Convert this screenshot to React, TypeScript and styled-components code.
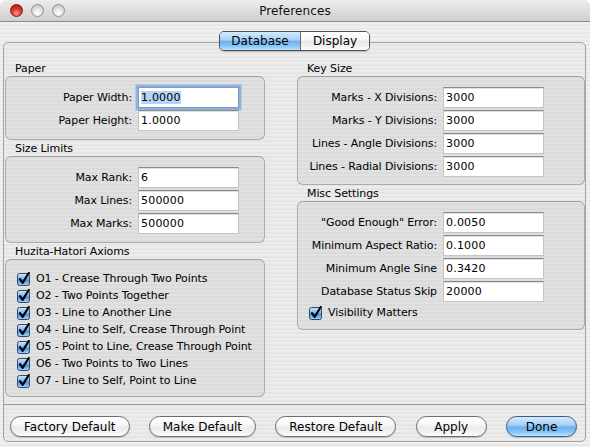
import React from "react";
import styled, { createGlobalStyle, css } from "styled-components";

const GlobalStyle = createGlobalStyle`
  html, body { margin: 0; padding: 0; background: #ffffff; }
  * { box-sizing: border-box; }
`;

const FONT = `"DejaVu Sans", "Liberation Sans", sans-serif`;

const Window = styled.div`
  width: 590px;
  height: 447px;
  border-radius: 6px 6px 0 0;
  overflow: hidden;
  display: flex;
  flex-direction: column;
  font-family: ${FONT};
  color: #000;
`;

const TitleBar = styled.div`
  height: 22px;
  flex: none;
  position: relative;
  display: flex;
  align-items: center;
  justify-content: center;
  background: linear-gradient(#ececec 0%, #dedede 50%, #cfcfcf 100%);
  border-bottom: 1px solid #8c8c8c;
`;

const Lights = styled.div`
  position: absolute;
  left: 10px;
  top: 4px;
  display: flex;
  gap: 8px;
`;

const Light = styled.div<{ $red?: boolean }>`
  width: 13px;
  height: 13px;
  border-radius: 50%;
  ${(p) =>
    p.$red
      ? css`
          background: radial-gradient(circle at 50% 75%, #ff9a8a 0%, #e0352a 45%, #a8120c 100%);
          border: 1px solid #7c1a14;
        `
      : css`
          background: radial-gradient(circle at 50% 75%, #ffffff 0%, #e2e2e2 50%, #b4b4b4 100%);
          border: 1px solid #8e8e8e;
        `}
`;

const Title = styled.div`
  font-size: 12px;
  letter-spacing: 0.1px;
  color: #111;
`;

const Body = styled.div`
  flex: 1;
  display: flex;
  flex-direction: column;
  align-items: stretch;
  padding: 9px 4px 5px 3px;
  background: repeating-linear-gradient(to bottom, #f0f0f0 0px, #f0f0f0 2px, #e9e9e9 2px, #e9e9e9 4px);
`;

const Segmented = styled.div`
  align-self: center;
  position: relative;
  z-index: 1;
  flex: none;
  display: flex;
  height: 20px;
  margin-bottom: -9px;
  border: 1px solid #4f4f4f;
  border-radius: 5px;
  overflow: hidden;
  box-shadow: 0 1px 1px rgba(0, 0, 0, 0.2);
`;

const Segment = styled.div<{ $active?: boolean; $w: number }>`
  width: ${(p) => p.$w}px;
  display: flex;
  align-items: center;
  justify-content: center;
  font-size: 12px;
  line-height: 18px;
  & + & { border-left: 1px solid #6a6a6a; }
  ${(p) =>
    p.$active
      ? css`
          background: linear-gradient(#d4eafe 0%, #a5cff6 45%, #6fb1f0 52%, #8cc9f8 80%, #b6e2fd 100%);
        `
      : css`
          background: linear-gradient(#ffffff 0%, #f6f6f6 45%, #e9e9e9 52%, #f2f2f2 80%, #fbfbfb 100%);
        `}
`;

const TabBox = styled.div`
  flex: 1;
  min-height: 0;
  display: flex;
  flex-direction: column;
  border: 1px solid #a3a3a3;
  border-radius: 5px;
  background: rgba(0, 0, 0, 0.015);
  & > * { flex: none; }
`;

const Columns = styled.div`
  display: grid;
  grid-template-columns: 260px 288px;
  column-gap: 32px;
  padding: 18px 0 0 1px;
  align-items: start;
`;

const Column = styled.div`
  display: flex;
  flex-direction: column;
  gap: 1px;
`;

const Group = styled.div`
  display: flex;
  flex-direction: column;
`;

const GroupLabel = styled.div`
  font-size: 11px;
  line-height: 15px;
  height: 15px;
  padding-left: 10px;
  letter-spacing: -0.1px;
`;

const GroupBox = styled.div<{ $pb?: number }>`
  border: 1px solid #ababab;
  border-top-color: #a0a0a0;
  border-radius: 6px;
  background: rgba(0, 0, 0, 0.045);
  padding: 10px 0 ${(p) => p.$pb ?? 8}px 0;
  display: flex;
  flex-direction: column;
  gap: 2px;
`;

const FieldRow = styled.div<{ $lw: number }>`
  display: grid;
  grid-template-columns: ${(p) => p.$lw}px 101px;
  column-gap: 6px;
  align-items: center;
  height: 21px;
`;

const FieldLabel = styled.div`
  font-size: 11px;
  text-align: right;
  white-space: nowrap;
  letter-spacing: -0.1px;
`;

const Field = styled.div<{ $focused?: boolean }>`
  height: 21px;
  background: #ffffff;
  border: 1px solid #c4c4c4;
  border-top-color: #8a8a8a;
  box-shadow: inset 0 1px 0 #e0e0e0;
  font-size: 11px;
  line-height: 19px;
  padding-left: 2px;
  letter-spacing: 0.2px;
  ${(p) =>
    p.$focused &&
    css`
      border-color: #7c9ac4;
      box-shadow: 0 0 0 2px #8db2e3, 0 0 0 3px rgba(141, 178, 227, 0.45);
    `}
`;

const Selection = styled.span`
  background: #b5d3f5;
`;

const CheckList = styled.div`
  display: flex;
  flex-direction: column;
  padding-left: 11px;
`;

const CheckRow = styled.div`
  height: 17px;
  display: flex;
  align-items: center;
  gap: 5px;
  font-size: 11px;
  letter-spacing: -0.1px;
  white-space: nowrap;
`;

const Separator = styled.div`
  height: 1px;
  background: #9a9a9a;
  margin-top: 7px;
`;

const ButtonRow = styled.div`
  display: flex;
  justify-content: space-between;
  padding: 11px 8px 0 6px;
`;

const Button = styled.div<{ $default?: boolean }>`
  height: 21px;
  min-width: 71px;
  padding: 0 13px;
  border-radius: 11px;
  display: flex;
  align-items: center;
  justify-content: center;
  font-size: 12px;
  white-space: nowrap;
  box-shadow: 0 1px 1px rgba(0, 0, 0, 0.18);
  ${(p) =>
    p.$default
      ? css`
          border: 1px solid #3a5a8e;
          background: linear-gradient(#d6ebfd 0%, #a9d1f7 40%, #6fb2ef 55%, #86c6f7 80%, #c0e8fe 100%);
        `
      : css`
          border: 1px solid #6e6e6e;
          background: linear-gradient(#ffffff 0%, #f7f7f7 40%, #ebebeb 55%, #f1f1f1 80%, #ffffff 100%);
        `}
`;

const CheckIcon = () => (
  <svg width="14" height="14" viewBox="0 0 14 14" style={{ flex: "none" }}>
    <defs>
      <linearGradient id="cbg" x1="0" y1="0" x2="0" y2="1">
        <stop offset="0" stopColor="#d2e8fc" />
        <stop offset="0.45" stopColor="#7fb8f0" />
        <stop offset="0.55" stopColor="#3f8fe6" />
        <stop offset="1" stopColor="#a2d8fd" />
      </linearGradient>
    </defs>
    <rect x="0.5" y="1.5" width="12" height="12" rx="2" fill="url(#cbg)" stroke="#33476b" />
    <path d="M3 7.2 L5.6 10.8 L11.8 1" fill="none" stroke="#000" strokeWidth="2.2" strokeLinecap="round" strokeLinejoin="round" />
  </svg>
);

type Row = { label: string; value: string; focused?: boolean };

const FieldGroup = ({ title, rows, lw, pb }: { title: string; rows: Row[]; lw: number; pb?: number }) => (
  <Group>
    <GroupLabel>{title}</GroupLabel>
    <GroupBox $pb={pb}>
      {rows.map((r) => (
        <FieldRow key={r.label} $lw={lw}>
          <FieldLabel>{r.label}</FieldLabel>
          <Field $focused={r.focused}>{r.focused ? <Selection>{r.value}</Selection> : r.value}</Field>
        </FieldRow>
      ))}
    </GroupBox>
  </Group>
);

const axioms = [
  "O1 - Crease Through Two Points",
  "O2 - Two Points Together",
  "O3 - Line to Another Line",
  "O4 - Line to Self, Crease Through Point",
  "O5 - Point to Line, Crease Through Point",
  "O6 - Two Points to Two Lines",
  "O7 - Line to Self, Point to Line",
];

export default function App() {
  return (
    <>
      <GlobalStyle />
      <Window>
        <TitleBar>
          <Lights>
            <Light $red />
            <Light />
            <Light />
          </Lights>
          <Title>Preferences</Title>
        </TitleBar>
        <Body>
          <Segmented>
            <Segment $active $w={80}>Database</Segment>
            <Segment $w={69}>Display</Segment>
          </Segmented>
          <TabBox>
            <Columns>
              <Column>
                <FieldGroup
                  title="Paper"
                  lw={126}
                  rows={[
                    { label: "Paper Width:", value: "1.0000", focused: true },
                    { label: "Paper Height:", value: "1.0000" },
                  ]}
                />
                <FieldGroup
                  title="Size Limits"
                  lw={126}
                  rows={[
                    { label: "Max Rank:", value: "6" },
                    { label: "Max Lines:", value: "500000" },
                    { label: "Max Marks:", value: "500000" },
                  ]}
                />
                <Group>
                  <GroupLabel>Huzita-Hatori Axioms</GroupLabel>
                  <GroupBox $pb={7}>
                    <CheckList>
                      {axioms.map((a) => (
                        <CheckRow key={a}>
                          <CheckIcon />
                          {a}
                        </CheckRow>
                      ))}
                    </CheckList>
                  </GroupBox>
                </Group>
              </Column>
              <Column>
                <FieldGroup
                  title="Key Size"
                  lw={139}
                  pb={7}
                  rows={[
                    { label: "Marks - X Divisions:", value: "3000" },
                    { label: "Marks - Y Divisions:", value: "3000" },
                    { label: "Lines - Angle Divisions:", value: "3000" },
                    { label: "Lines - Radial Divisions:", value: "3000" },
                  ]}
                />
                <Group>
                  <GroupLabel>Misc Settings</GroupLabel>
                  <GroupBox $pb={8}>
                    {[
                      { label: "\"Good Enough\" Error:", value: "0.0050" },
                      { label: "Minimum Aspect Ratio:", value: "0.1000" },
                      { label: "Minimum Angle Sine", value: "0.3420" },
                      { label: "Database Status Skip", value: "20000" },
                    ].map((r) => (
                      <FieldRow key={r.label} $lw={139}>
                        <FieldLabel>{r.label}</FieldLabel>
                        <Field>{r.value}</Field>
                      </FieldRow>
                    ))}
                    <CheckList>
                      <CheckRow>
                        <CheckIcon />
                        Visibility Matters
                      </CheckRow>
                    </CheckList>
                  </GroupBox>
                </Group>
              </Column>
            </Columns>
            <Separator />
            <ButtonRow>
              <Button>Factory Default</Button>
              <Button>Make Default</Button>
              <Button>Restore Default</Button>
              <Button>Apply</Button>
              <Button $default>Done</Button>
            </ButtonRow>
          </TabBox>
        </Body>
      </Window>
    </>
  );
}
